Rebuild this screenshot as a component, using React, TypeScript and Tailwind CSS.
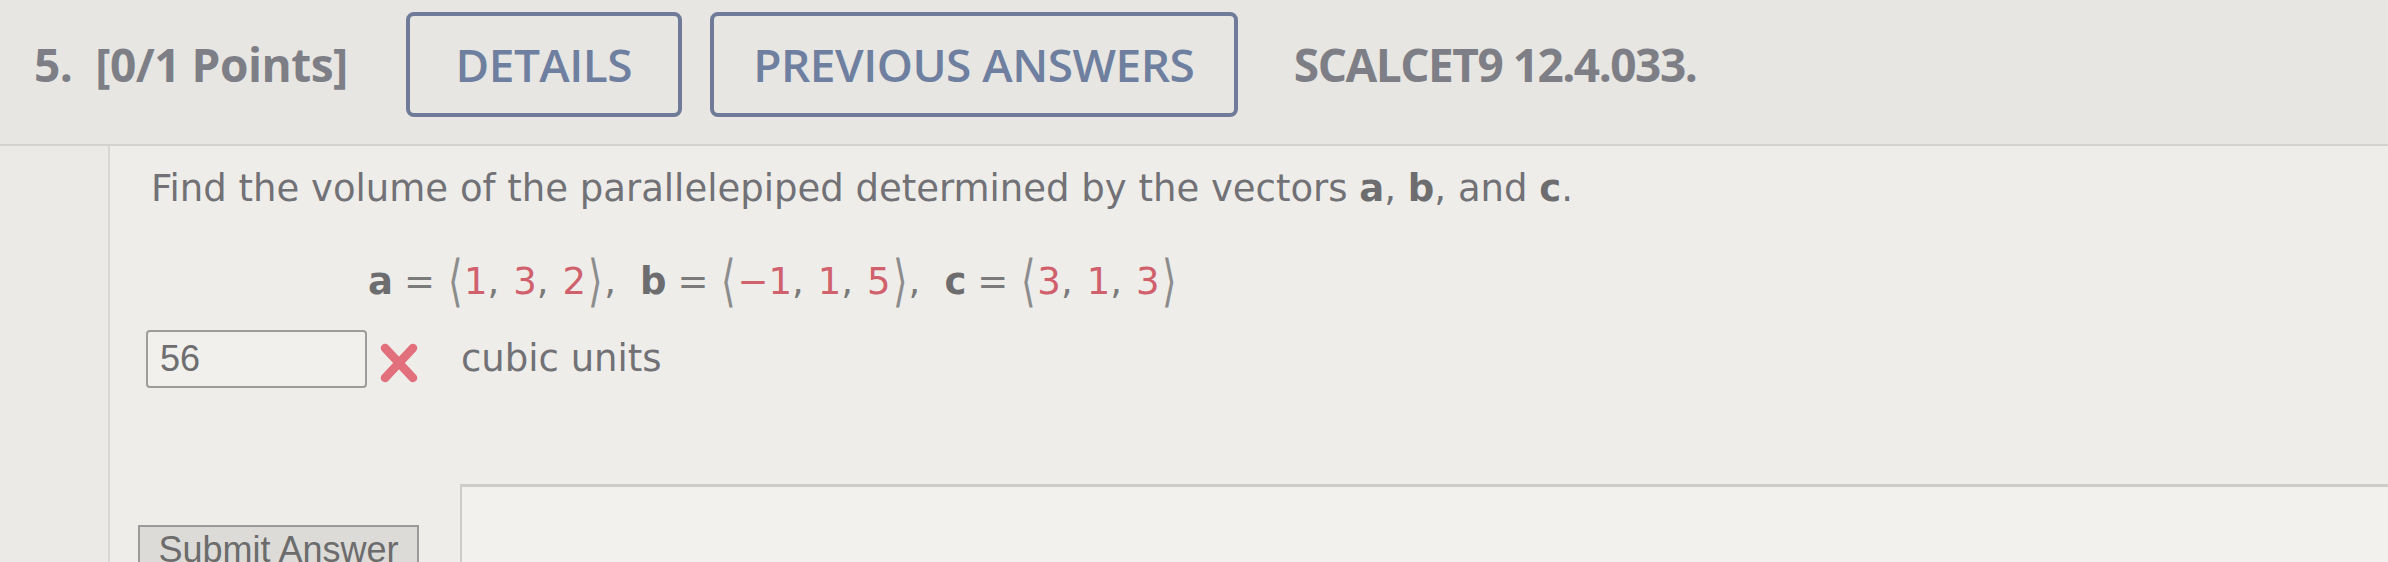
import React from "react";

// Red cross shown next to a wrong answer
function WrongMark() {
  return (
    <svg width="42" height="42" viewBox="0 0 42 42" className="shrink-0">
      <line x1="7" y1="6" x2="35" y2="36" stroke="#e2707c" strokeWidth="8.5" strokeLinecap="round" />
      <line x1="35" y1="6" x2="7" y2="36" stroke="#e2707c" strokeWidth="8.5" strokeLinecap="round" />
    </svg>
  );
}

function Bracket({ side }: { side: "l" | "r" }) {
  return (
    <span className="inline-block scale-y-[1.5] text-[#8c8c8c] font-light mx-[2px]">
      {side === "l" ? "\u27E8" : "\u27E9"}
    </span>
  );
}

function Vec({ name, values }: { name: string; values: string[] }) {
  return (
    <span className="inline-flex items-center">
      <span className="font-bold text-[#6d6d70]">{name}</span>
      <span className="mx-[11px] text-[#7a7a7a]">=</span>
      <Bracket side="l" />
      {values.map((v, i) => (
        <span key={i} className="inline-flex items-center">
          <span className="text-[#d0606c]">{v}</span>
          {i < values.length - 1 && <span className="text-[#7a7a7a] mr-[14px]">,</span>}
        </span>
      ))}
      <Bracket side="r" />
    </span>
  );
}

export default function App() {
  return (
    <div className="w-[2388px] h-[562px] overflow-hidden bg-[#eeede9] flex flex-col">
      {/* question header */}
      <div className="h-[146px] shrink-0 bg-[#e7e6e2] border-b-2 border-[#d3d2ce] pt-[12px] pl-[34px] font-['Open_Sans',sans-serif]">
        <div className="flex items-center h-[105px]">
          <span className="text-[46px] font-bold text-[#7e7f86] whitespace-pre tracking-[-0.5px]">5.  [0/1 Points]</span>
          <div className="ml-[58px] w-[276px] h-[105px] border-4 border-[#6f7b99] rounded-[8px] flex items-center justify-center text-[46px] font-semibold text-[#6f7fa0] tracking-[-0.5px]">
            DETAILS
          </div>
          <div className="ml-[28px] w-[528px] h-[105px] border-4 border-[#6f7b99] rounded-[8px] flex items-center justify-center text-[46px] font-semibold text-[#6f7fa0] tracking-[-0.5px]">
            PREVIOUS ANSWERS
          </div>
          <span className="ml-[56px] text-[46px] font-bold text-[#7e7f86] tracking-[-1.5px]">SCALCET9 12.4.033.</span>
        </div>
      </div>

      {/* question body */}
      <div className="flex flex-1 min-h-0">
        <div className="w-[110px] shrink-0 border-r-2 border-[#d8d7d3] bg-[#ebeae6]" />
        <div className="flex-1 flex flex-col font-['DejaVu_Sans',sans-serif] text-[#717176]">
          <p className="mt-[21px] ml-[41px] text-[37px] leading-[44px]">
            Find the volume of the parallelepiped determined by the vectors <b className="text-[#6d6d70]">a</b>,{" "}
            <b className="text-[#6d6d70]">b</b>, and <b className="text-[#6d6d70]">c</b>.
          </p>

          <div className="mt-[43px] ml-[258px] h-[56px] flex items-center text-[37px]">
            <Vec name="a" values={["1", "3", "2"]} />
            <span className="text-[#7a7a7a] mr-[24px]">,</span>
            <Vec name="b" values={["\u22121", "1", "5"]} />
            <span className="text-[#7a7a7a] mr-[24px]">,</span>
            <Vec name="c" values={["3", "1", "3"]} />
          </div>

          <div className="mt-[20px] ml-[36px] flex items-center">
            <div className="w-[221px] h-[58px] border-2 border-[#9c9c9c] rounded-[4px] bg-[#f1f0ec] flex items-center pl-[12px] font-['Liberation_Sans',sans-serif] text-[36px] text-[#6e6e70]">
              56
            </div>
            <div className="ml-[11px] mt-[8px]">
              <WrongMark />
            </div>
            <span className="ml-[41px] text-[37px]">cubic units</span>
          </div>

          <div className="mt-[96px] flex flex-1 min-h-0">
            <div className="ml-[28px] mt-[41px] w-[281px] h-[56px] shrink-0 bg-[#dcdbd8] border-2 border-[#9a9a9a] flex justify-center pt-[2px] font-['Liberation_Sans',sans-serif] text-[36px] leading-[42px] text-[#6c6c6c]">
              Submit Answer
            </div>
            <div className="ml-[41px] flex-1 border-t-[3px] border-l-2 border-[#cdccc8] bg-[#f2f1ed]" />
          </div>
        </div>
      </div>
    </div>
  );
}
